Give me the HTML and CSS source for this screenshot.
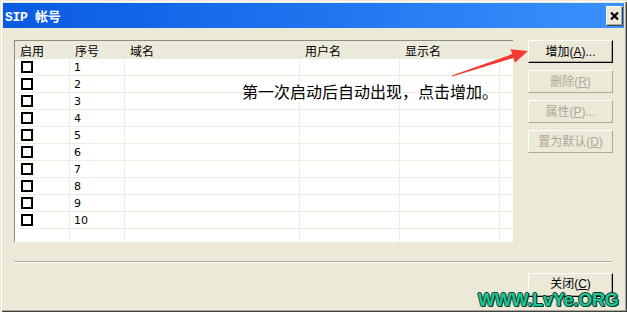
FILE: index.html
```html
<!DOCTYPE html>
<html>
<head>
    <meta charset="utf-8">
    <title>SIP 帐号</title>
    <link rel="stylesheet" href="styles.css">
</head>
<body>
    <div class="window">
        <div class="titlebar">
            <span class="title">SIP 帐号</span>
            <button class="close-x">
                <svg width="9" height="8" viewBox="0 0 9 8">
                    <path d="M1 0.5 L8 7.5 M8 0.5 L1 7.5" stroke="#000" stroke-width="2.2" fill="none"/>
                </svg>
            </button>
        </div>
        <div class="content">
            <div class="top-area">
                <div class="list">
                    <div class="row head">
                        <div class="cell">启用</div>
                        <div class="cell">序号</div>
                        <div class="cell">域名</div>
                        <div class="cell">用户名</div>
                        <div class="cell">显示名</div>
                        <div class="cell"></div>
                    </div>
                    <div class="row"><div class="cell"><span class="check"></span></div><div class="cell num">1</div><div class="cell"></div><div class="cell"></div><div class="cell"></div><div class="cell"></div></div>
                    <div class="row"><div class="cell"><span class="check"></span></div><div class="cell num">2</div><div class="cell"></div><div class="cell"></div><div class="cell"></div><div class="cell"></div></div>
                    <div class="row"><div class="cell"><span class="check"></span></div><div class="cell num">3</div><div class="cell"></div><div class="cell"></div><div class="cell"></div><div class="cell"></div></div>
                    <div class="row"><div class="cell"><span class="check"></span></div><div class="cell num">4</div><div class="cell"></div><div class="cell"></div><div class="cell"></div><div class="cell"></div></div>
                    <div class="row"><div class="cell"><span class="check"></span></div><div class="cell num">5</div><div class="cell"></div><div class="cell"></div><div class="cell"></div><div class="cell"></div></div>
                    <div class="row"><div class="cell"><span class="check"></span></div><div class="cell num">6</div><div class="cell"></div><div class="cell"></div><div class="cell"></div><div class="cell"></div></div>
                    <div class="row"><div class="cell"><span class="check"></span></div><div class="cell num">7</div><div class="cell"></div><div class="cell"></div><div class="cell"></div><div class="cell"></div></div>
                    <div class="row"><div class="cell"><span class="check"></span></div><div class="cell num">8</div><div class="cell"></div><div class="cell"></div><div class="cell"></div><div class="cell"></div></div>
                    <div class="row"><div class="cell"><span class="check"></span></div><div class="cell num">9</div><div class="cell"></div><div class="cell"></div><div class="cell"></div><div class="cell"></div></div>
                    <div class="row"><div class="cell"><span class="check"></span></div><div class="cell num">10</div><div class="cell"></div><div class="cell"></div><div class="cell"></div><div class="cell"></div></div>
                    <div class="row filler"><div class="cell"></div><div class="cell"></div><div class="cell"></div><div class="cell"></div><div class="cell"></div><div class="cell"></div></div>
                </div>
                <div class="side-buttons">
                    <button class="btn default">增加(<u>A</u>)...</button>
                    <button class="btn" disabled>删除(<u>R</u>)</button>
                    <button class="btn" disabled>属性(<u>P</u>)...</button>
                    <button class="btn" disabled>置为默认(<u>D</u>)</button>
                </div>
            </div>
            <div class="separator"></div>
            <div class="bottom-area">
                <button class="btn">关闭(<u>C</u>)</button>
            </div>
        </div>

        <!-- annotation drawn over the dialog -->
        <div class="note">第一次启动后自动出现，点击增加。</div>
        <svg class="arrow" width="90" height="45" viewBox="0 0 90 45">
            <polygon points="6.8,35.5 67.2,14.1 65.6,9.3 83,11 70,22.7 68.4,17.9 7.2,36.5" fill="#f23a32"/>
        </svg>
        <div class="watermark">WWW.LvYe.ORG</div>
    </div>
</body>
</html>
```

FILE: styles.css
```css
body {
    margin: 0;
    padding: 0;
    background: #ece9d8;
    font-family: "Liberation Sans", "Noto Sans CJK SC", sans-serif;
    font-size: 12px;
    color: #000;
}

.window {
    position: relative;
    width: 627px;
    height: 312px;
    box-sizing: border-box;
    padding: 3px 3px 3px 3px;
    background: #ece9d8;
    box-shadow: inset 1px 1px 0 #ece9d8, inset 2px 2px 0 #fff, inset -1px -1px 0 #404040, inset -2px -2px 0 #aca899;
}

.titlebar {
    height: 25px;
    display: flex;
    align-items: center;
    justify-content: space-between;
    padding: 0 1px 0 2px;
    background: linear-gradient(to right, #0a5ae2 0%, #1f74ee 50%, #3b92fd 100%);
}

.title {
    color: #fff;
    font-family: "Liberation Mono", "Noto Sans CJK SC", monospace;
    font-weight: bold;
    font-size: 13px;
    letter-spacing: -0.3px;
}

.close-x {
    width: 17px;
    height: 20px;
    padding: 0;
    margin-top: 1px;
    background: #ece9d8;
    border: 1px solid;
    border-color: #fff #404040 #404040 #fff;
    box-shadow: inset -1px -1px 0 #aca899;
    display: flex;
    align-items: center;
    justify-content: center;
}

.content {
    padding: 12px 11px 0 11px;
}

.top-area {
    display: flex;
    gap: 15px;
}

.list {
    width: 499px;
    height: 202px;
    box-sizing: border-box;
    background: #fff;
    border-top: 1px solid #8e8c80;
    border-left: 1px solid #8e8c80;
    overflow: hidden;
}

.row {
    display: grid;
    grid-template-columns: 55px 55px 175px 100px 100px 1fr;
    height: 17px;
    box-sizing: border-box;
    border-bottom: 1px solid #efede2;
}

.row .cell {
    border-right: 1px solid #efede2;
    display: flex;
    align-items: center;
    overflow: hidden;
}

.row .cell:last-child {
    border-right: none;
}

.row.head {
    height: 18px;
    background: #ebeadb;
    border-bottom: none;
}

.row.head .cell {
    border-right: none;
    padding-left: 5px;
    padding-top: 1px;
}

.row.filler {
    height: 14px;
    border-bottom: none;
}

.cell.num {
    padding-left: 4px;
    font-family: "DejaVu Sans", sans-serif;
    font-size: 11px;
}

.check {
    width: 8px;
    height: 8px;
    margin-left: 6px;
    border: 2px solid #000;
}

.side-buttons {
    display: flex;
    flex-direction: column;
    gap: 7px;
}

.btn {
    width: 85px;
    height: 23px;
    padding: 0;
    background: #ece9d8;
    border: 1px solid;
    border-color: #fff #716f64 #716f64 #fff;
    box-shadow: inset -1px -1px 0 #aca899;
    font-family: "Liberation Sans", "Noto Sans CJK SC", sans-serif;
    font-size: 12px;
    line-height: 14px;
    color: #000;
}

.btn.default {
    border-color: #fff #000 #000 #fff;
}

.btn:disabled {
    color: #aca899;
    border-color: #fff #aca899 #aca899 #fff;
    box-shadow: none;
}

.separator {
    margin-top: 19px;
    width: 598px;
    height: 1px;
    background: #aca899;
    border-bottom: 1px solid #fff;
}

.bottom-area {
    display: flex;
    justify-content: flex-end;
    margin-top: 10px;
}

.bottom-area .btn {
    height: 24px;
    padding-bottom: 3px;
    border-color: #fff #000 #000 #fff;
}

.note {
    position: absolute;
    left: 242px;
    top: 79px;
    font-family: "Noto Sans CJK SC", sans-serif;
    font-size: 16px;
    color: #000;
}

.arrow {
    position: absolute;
    left: 445px;
    top: 40px;
}

.watermark {
    position: absolute;
    left: 478px;
    top: 293px;
    font-family: "Liberation Sans", sans-serif;
    font-weight: bold;
    font-size: 18px;
    line-height: 14px;
    letter-spacing: -0.2px;
    color: #22c497;
    text-shadow: 1px 0 0 #0b3d2c, -1px 0 0 #0b3d2c, 0 1px 0 #0b3d2c, 0 -1px 0 #0b3d2c, 1px 1px 0 #0b3d2c;
}
```
